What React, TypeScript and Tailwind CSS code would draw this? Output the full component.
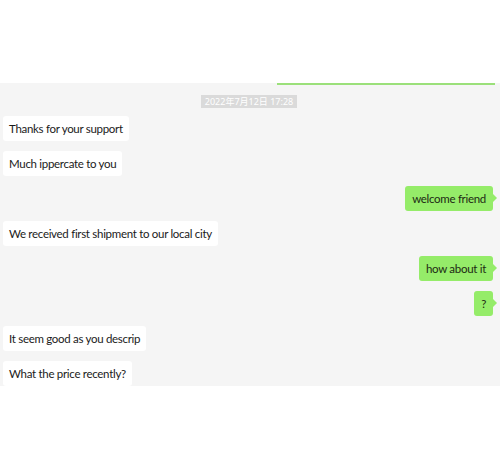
type Msg = { side: 'left' | 'right'; text: string }

const messages: Msg[] = [
    { side: 'left', text: 'Thanks for your support' },
    { side: 'left', text: 'Much ippercate to you' },
    { side: 'right', text: 'welcome friend' },
    { side: 'left', text: 'We received first shipment to our local city' },
    { side: 'right', text: 'how about it' },
    { side: 'right', text: '?' },
    { side: 'left', text: 'It seem good as you descrip' },
    { side: 'left', text: 'What the price recently?' },
]

function Bubble({ msg }: { msg: Msg }) {
    if (msg.side === 'right') {
        return (
            <div className="flex justify-end pr-[7px]">
                <div className="relative rounded-[3px] bg-[#95ec69] px-[7px] h-[25px] flex items-center text-[11.5px] tracking-[-0.3px] text-[#1d2a14]">
                    {msg.text}
                    <span className="absolute right-[-4px] top-[8px] w-0 h-0 border-y-[4px] border-y-transparent border-l-[4px] border-l-[#95ec69]" />
                </div>
            </div>
        )
    }
    return (
        <div className="flex justify-start pl-[3px]">
            <div className="rounded-[3px] bg-white px-[6px] h-[25px] flex items-center text-[11.5px] tracking-[-0.3px] text-[#1a1a1a]">
                {msg.text}
            </div>
        </div>
    )
}

export default function App() {
    return (
        <div className="w-[500px] h-[470px] bg-white font-['Lato','Noto_Sans',sans-serif]">
            <div className="h-[83px]" />
            <div className="h-[303px] bg-[#f5f5f5] overflow-hidden">
                <div className="flex justify-end pr-[5px]">
                    <div className="w-[218px] h-[2px] bg-[#9be07a]" />
                </div>
                <div className="flex justify-center mt-[10px] pr-[2px]">
                    <div className="bg-[#dadada] text-white text-[9px] leading-[13px] px-[4px] font-['Noto_Sans','Noto_Sans_CJK_SC',sans-serif]">
                        2022年7月12日 17:28
                    </div>
                </div>
                <div className="mt-[8px] flex flex-col gap-[10px]">
                    {messages.map((m, i) => (
                        <Bubble key={i} msg={m} />
                    ))}
                </div>
            </div>
        </div>
    )
}
